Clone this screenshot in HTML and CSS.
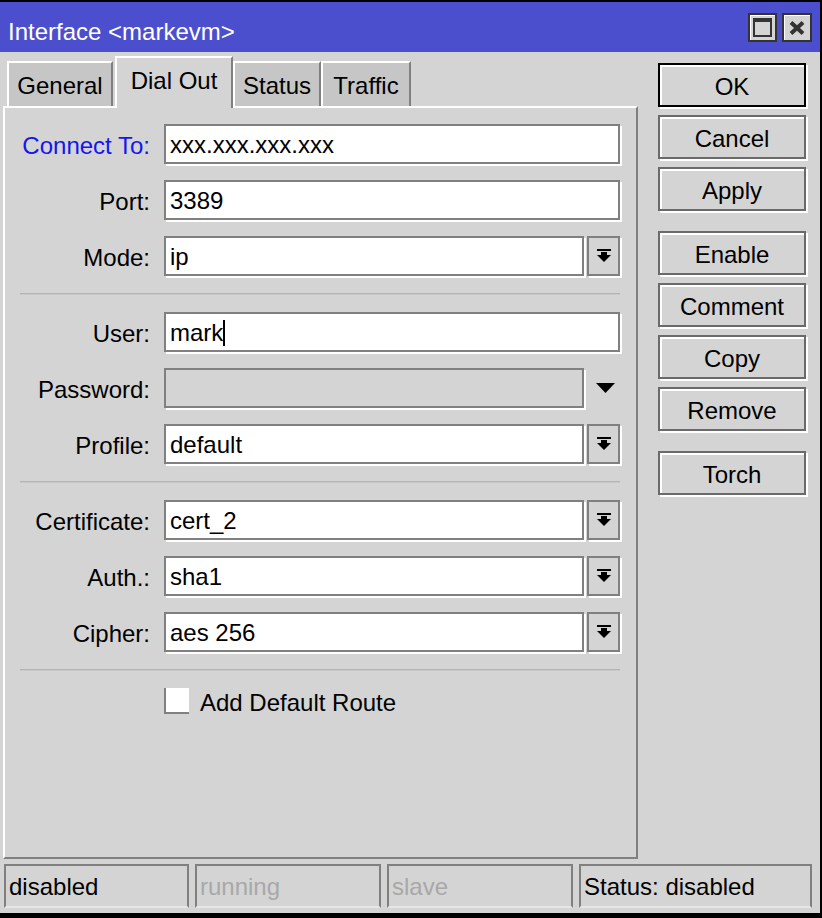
FILE: index.html
```html
<!DOCTYPE html>
<html>
<head>
<meta charset="utf-8">
<link rel="stylesheet" href="styles.css">
</head>
<body>
<div class="window">
  <div class="titlebar">
    <span class="title">Interface &lt;markevm&gt;</span>
    <div class="wbtns">
      <span class="wbtn"><svg width="19" height="19" viewBox="0 0 19 19"><rect x="0" y="0" width="19" height="19" fill="#333"/><rect x="2" y="4" width="15" height="13" fill="#d4d4d4"/></svg></span>
      <span class="wbtn wide"><svg width="16" height="14" viewBox="0 0 16 14"><path d="M2 1.5 L14 12.5 M14 1.5 L2 12.5" stroke="#333" stroke-width="4"/></svg></span>
    </div>
  </div>
  <div class="body">
    <div class="left">
      <div class="tabs">
        <div class="tab t-general">General</div>
        <div class="tab active t-dial">Dial Out</div>
        <div class="tab t-status">Status</div>
        <div class="tab t-traffic">Traffic</div>
      </div>
      <div class="panel">
        <div class="row"><span class="label blue">Connect To:</span><div class="field"><div class="input">xxx.xxx.xxx.xxx</div></div></div>
        <div class="row"><span class="label">Port:</span><div class="field"><div class="input">3389</div></div></div>
        <div class="row"><span class="label">Mode:</span><div class="field"><div class="input">ip</div><div class="ddbtn"><svg width="14" height="14" viewBox="0 0 14 14"><rect x="0" y="0" width="14" height="2" fill="#000"/><rect x="4" y="3" width="6" height="3" fill="#000"/><polygon points="0,6 14,6 7,13" fill="#000"/></svg></div></div></div>
        <div class="sep"></div>
        <div class="row"><span class="label">User:</span><div class="field"><div class="input">mark<span class="caret"></span></div></div></div>
        <div class="row"><span class="label">Password:</span><div class="field"><div class="input disabled"></div><div class="ddspace"><svg width="19" height="10" viewBox="0 0 19 10"><polygon points="0,0 19,0 9.5,10" fill="#000"/></svg></div></div></div>
        <div class="row"><span class="label">Profile:</span><div class="field"><div class="input">default</div><div class="ddbtn"><svg width="14" height="14" viewBox="0 0 14 14"><rect x="0" y="0" width="14" height="2" fill="#000"/><rect x="4" y="3" width="6" height="3" fill="#000"/><polygon points="0,6 14,6 7,13" fill="#000"/></svg></div></div></div>
        <div class="sep"></div>
        <div class="row"><span class="label">Certificate:</span><div class="field"><div class="input">cert_2</div><div class="ddbtn"><svg width="14" height="14" viewBox="0 0 14 14"><rect x="0" y="0" width="14" height="2" fill="#000"/><rect x="4" y="3" width="6" height="3" fill="#000"/><polygon points="0,6 14,6 7,13" fill="#000"/></svg></div></div></div>
        <div class="row"><span class="label">Auth.:</span><div class="field"><div class="input">sha1</div><div class="ddbtn"><svg width="14" height="14" viewBox="0 0 14 14"><rect x="0" y="0" width="14" height="2" fill="#000"/><rect x="4" y="3" width="6" height="3" fill="#000"/><polygon points="0,6 14,6 7,13" fill="#000"/></svg></div></div></div>
        <div class="row"><span class="label">Cipher:</span><div class="field"><div class="input">aes 256</div><div class="ddbtn"><svg width="14" height="14" viewBox="0 0 14 14"><rect x="0" y="0" width="14" height="2" fill="#000"/><rect x="4" y="3" width="6" height="3" fill="#000"/><polygon points="0,6 14,6 7,13" fill="#000"/></svg></div></div></div>
        <div class="sep"></div>
        <div class="checkrow"><span class="checkbox"></span><span class="checklabel">Add Default Route</span></div>
      </div>
    </div>
    <div class="buttons">
      <div class="btn default">OK</div>
      <div class="btn">Cancel</div>
      <div class="btn">Apply</div>
      <div class="btn group">Enable</div>
      <div class="btn">Comment</div>
      <div class="btn">Copy</div>
      <div class="btn">Remove</div>
      <div class="btn group">Torch</div>
    </div>
  </div>
  <div class="statusbar">
    <div class="cell c1">disabled</div>
    <div class="cell c2 dim">running</div>
    <div class="cell c3 dim">slave</div>
    <div class="cell c4">Status: disabled</div>
  </div>
</div>
</body>
</html>
```
FILE: styles.css
```css
html, body {
  margin: 0;
  padding: 0;
  background: #000;
}

.window {
  width: 822px;
  height: 918px;
  box-sizing: border-box;
  border-top: 2px solid #000;
  border-right: 2px solid #000;
  border-bottom: 5px solid #000;
  background: #d4d4d4;
  display: flex;
  flex-direction: column;
  font-family: "Liberation Sans", Arial, sans-serif;
  font-size: 24px;
  color: #000;
}

.titlebar {
  height: 50px;
  flex: none;
  background: #4c4fcd;
  display: flex;
  align-items: center;
  padding: 0 8px;
}

.title {
  flex: 1;
  color: #fff;
  align-self: stretch;
  padding-top: 10px;
  line-height: 40px;
  white-space: nowrap;
}

.wbtns {
  display: flex;
  gap: 5px;
  padding-top: 1px;
}

.wbtn {
  box-sizing: border-box;
  width: 29px;
  height: 29px;
  border: 2px solid #333;
  background: #d4d4d4;
  box-shadow: inset 1px 1px 0 #fff;
  display: flex;
  align-items: center;
  justify-content: center;
}

.wbtn.wide {
  width: 30px;
}

.body {
  height: 807px;
  flex: none;
  display: flex;
  gap: 20px;
}

.left {
  margin-left: 3px;
  width: 635px;
  display: flex;
  flex-direction: column;
}

.tabs {
  height: 54px;
  flex: none;
  display: flex;
  align-items: flex-end;
  padding-left: 4px;
  z-index: 1;
}

.tab {
  box-sizing: border-box;
  height: 45px;
  border-top: 2px solid #fff;
  border-left: 2px solid #fff;
  border-right: 2px solid #808080;
  background: #c6c6c6;
  display: flex;
  align-items: center;
  justify-content: center;
  white-space: nowrap;
  padding-top: 2px;
}

.t-general { width: 106px; margin-right: 2px; }
.t-dial { width: 118px; }
.t-status { width: 88px; }
.t-traffic { width: 90px; }

.tab.active {
  height: 52px;
  margin-bottom: -2px;
  background: #d4d4d4;
  padding-top: 0;
  padding-bottom: 4px;
}

.panel {
  flex: 1;
  box-sizing: border-box;
  border: 2px solid;
  border-color: #fff #808080 #808080 #fff;
  padding: 16px 16px 0 5px;
  display: flex;
  flex-direction: column;
  gap: 16px;
}

.row {
  display: flex;
  align-items: center;
  height: 40px;
  gap: 14px;
}

.label {
  width: 140px;
  flex: none;
  text-align: right;
  white-space: nowrap;
  padding-top: 3px;
}

.label.blue {
  color: #1515f0;
}

.field {
  flex: 1;
  display: flex;
  gap: 3px;
  height: 40px;
}

.input {
  flex: 1;
  box-sizing: border-box;
  height: 40px;
  border: 2px solid #808080;
  box-shadow: 2px 2px 0 #fff;
  background: #fff;
  padding-left: 4px;
  padding-top: 2px;
  line-height: 34px;
  white-space: nowrap;
}

.input.disabled {
  background: #d4d4d4;
}

.caret {
  display: inline-block;
  width: 2px;
  height: 26px;
  background: #000;
  vertical-align: middle;
  margin-top: -4px;
}

.ddbtn {
  width: 33px;
  flex: none;
  box-sizing: border-box;
  border: 2px solid #808080;
  box-shadow: 2px 2px 0 #fff;
  background: #d4d4d4;
  display: flex;
  align-items: center;
  justify-content: center;
  padding-left: 1px;
}

.ddspace {
  width: 33px;
  flex: none;
  display: flex;
  align-items: center;
  justify-content: center;
  padding-left: 3px;
  box-sizing: border-box;
}

.sep {
  height: 1px;
  border-bottom: 1px solid #c8c8c8;
  background: #b4b4b4;
  margin: 1px 0 1px 10px;
}

.checkrow {
  display: flex;
  align-items: center;
  gap: 11px;
  margin-left: 154px;
  height: 26px;
}

.checklabel {
  padding-top: 3px;
}

.checkbox {
  box-sizing: border-box;
  width: 25px;
  height: 26px;
  background: #fff;
  border-left: 2px solid #808080;
  border-bottom: 2px solid #808080;
}

.buttons {
  width: 148px;
  flex: none;
  display: flex;
  flex-direction: column;
  gap: 8px;
  padding-top: 11px;
}

.btn {
  box-sizing: border-box;
  height: 44px;
  border: 2px solid #6a6a6a;
  box-shadow: inset 2px 2px 0 #fff, 2px 2px 0 #fff;
  display: flex;
  align-items: center;
  justify-content: center;
  white-space: nowrap;
  padding-top: 3px;
}

.btn.default {
  border-color: #000;
}

.btn.group {
  margin-top: 12px;
}

.statusbar {
  height: 44px;
  flex: none;
  margin-top: 5px;
  display: flex;
  gap: 6px;
  padding-left: 4px;
}

.cell {
  box-sizing: border-box;
  border: 2px solid #808080;
  border-bottom-color: #e6e6e6;
  padding-left: 3px;
  padding-top: 2px;
  display: flex;
  align-items: center;
  white-space: nowrap;
}

.c1 { width: 185px; }
.c2 { width: 186px; }
.c3 { width: 186px; }
.c4 { width: 233px; }

.dim {
  color: #a8a8a8;
}
```
